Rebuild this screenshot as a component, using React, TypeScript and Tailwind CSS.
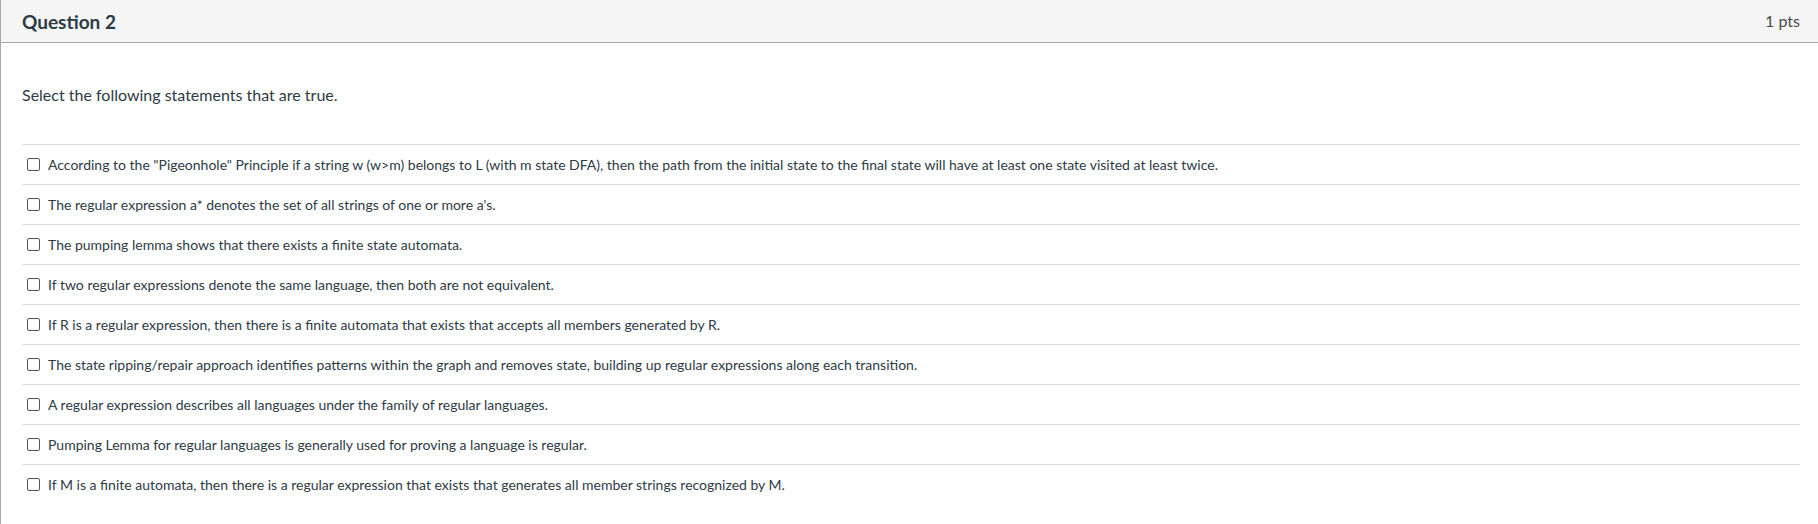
import React from "react";

const items = [
  'According to the "Pigeonhole" Principle if a string w (w>m) belongs to L (with m state DFA), then the path from the initial state to the final state will have at least one state visited at least twice.',
  "The regular expression a* denotes the set of all strings of one or more a's.",
  "The pumping lemma shows that there exists a finite state automata.",
  "If two regular expressions denote the same language, then both are not equivalent.",
  "If R is a regular expression, then there is a finite automata that exists that accepts all members generated by R.",
  "The state ripping/repair approach identifies patterns within the graph and removes state, building up regular expressions along each transition.",
  "A regular expression describes all languages under the family of regular languages.",
  "Pumping Lemma for regular languages is generally used for proving a language is regular.",
  "If M is a finite automata, then there is a regular expression that exists that generates all member strings recognized by M.",
];

export default function App() {
  return (
    <div
      className="h-[524px] w-full overflow-hidden border-l border-[#a8a8a8] bg-white text-[#2d3b45]"
      style={{ fontFamily: "Lato, 'Noto Sans', sans-serif" }}
    >
      <div className="flex h-[43px] items-center justify-between border-b border-[#aaaaaa] bg-[#f5f5f5] pl-[21px] pr-[18px]">
        <h2 className="text-[19px] font-bold leading-none">Question 2</h2>
        <div className="text-[16px] text-[#4a4a4a]">1 pts</div>
      </div>
      <div className="pl-[21px] pr-[18px]">
        <p className="pt-[42px] text-[16px] leading-[20px]">Select the following statements that are true.</p>
        <div className="mt-[39px]">
          {items.map((t, i) => (
            <label
              key={i}
              className="flex h-[40px] items-center border-t border-[#dcdcdc] pl-[5px]"
            >
              <span className="mr-[8px] h-[13px] w-[13px] shrink-0 rounded-[2px] border border-[#555]" />
              <span className="text-[14px] leading-none">{t}</span>
            </label>
          ))}
        </div>
      </div>
    </div>
  );
}
